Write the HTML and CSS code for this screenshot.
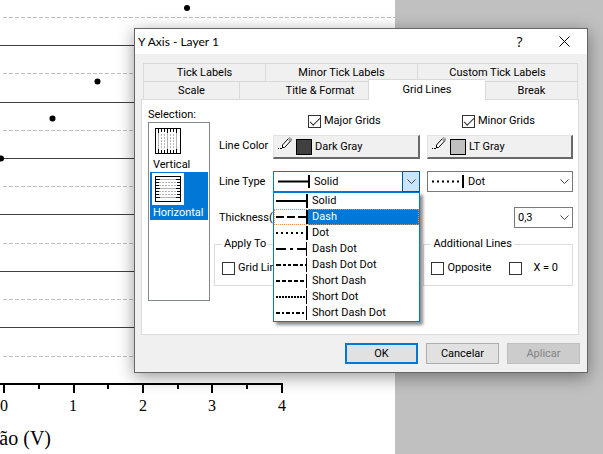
FILE: index.html
```html
<!DOCTYPE html>
<html lang="en">
<head>
<meta charset="utf-8">
<title>Y Axis - Layer 1</title>
<link rel="stylesheet" href="styles.css">
</head>
<body>
<svg class="defs" aria-hidden="true">
  <defs>
    <symbol id="pencil" viewBox="0 0 16 14">
      <path d="M5.500 10.500V7.500L11.500 1.500L14.500 2.500L8 10L5.500 10.500" stroke="none" fill="#fff"/>
      <path d="M11 3L13 1.500L14.500 2.500L12.500 4.500Z" fill="#a0a0a0"/>
      <path d="M5.500 11V8L11.500 1.500M5 10.500H7.500L14 3.500" stroke="#000" fill="none"/>
      <path d="M11.500 1.500L13 .5L14.500 2L14 3.500" stroke="#808080" fill="none"/>
      <path d="M1 11h1v1H1zM3 11h2v1H3z"/>
    </symbol>
    <symbol id="chevron" viewBox="0 0 9 6"><path d="M.5 .5l4 4 4-4" fill="none" stroke="#444"/></symbol>
  </defs>
</svg>

<svg class="chart" width="395" height="454" viewBox="0 0 395 454" role="img" aria-label="Graph">
  <g class="major"><path d="M0 45.500H395M0 102.500H395M0 158.500H395M0 214.500H395M0 271.500H395M0 327.500H395"/></g>
  <g class="minor"><path d="M3 17.500H395M3 73.500H395M3 130.500H395M3 186.500H395M3 243.500H395M3 299.500H395M3 356.500H395"/></g>
  <g class="axis"><path d="M0 384H283M4 384V393M74 384V393M143 384V393M212 384V393M282 384V393M39 384V389M108 384V389M178 384V389M247 384V389"/></g>
  <g class="points"><circle cx="187" cy="8" r="3"/><circle cx="97.500" cy="81.500" r="3"/><circle cx="52.500" cy="118.500" r="3"/><circle cx="1" cy="158.500" r="3"/></g>
  <g class="ticks"><text x="4" y="411">0</text><text x="73" y="411">1</text><text x="143" y="411">2</text><text x="212" y="411">3</text><text x="282" y="411">4</text></g>
  <text class="axis-title" x="51" y="445">ão (V)</text>
</svg>

<main class="dialog" role="dialog" aria-labelledby="title">
  <header class="titlebar">
    <h1 id="title">Y Axis - Layer 1</h1>
    <button class="caption" type="button">?</button>
    <button class="caption" type="button" aria-label="Close"><svg width="11" height="11" viewBox="0 0 11 11"><path d="M.5 .5l10 10M10.500 .5l-10 10" stroke="#000" fill="none"/></svg></button>
  </header>

  <nav class="tabs" role="tablist">
    <div class="tabrow back">
      <button type="button" role="tab">Tick Labels</button>
      <button type="button" role="tab">Minor Tick Labels</button>
      <button type="button" role="tab">Custom Tick Labels</button>
    </div>
    <div class="tabrow front">
      <button type="button" role="tab">Scale</button>
      <button type="button" role="tab" class="titletab">Title &amp; Format</button>
      <button type="button" role="tab" class="active" aria-selected="true">Grid Lines</button>
      <button type="button" role="tab">Break</button>
    </div>
  </nav>

  <section class="page" role="tabpanel">
    <div class="selection">
      <div class="caption-text">Selection:</div>
      <ul class="listbox" role="listbox" aria-label="Selection">
        <li role="option">
          <span class="thumb"><svg width="26" height="26" viewBox="0 0 26 26">
            <path d="M3.500 1v24M12.500 1v24M21.500 1v24" stroke="#b4b4b4"/>
            <path d="M6.500 6v15M9.500 6v15M15.500 6v15M18.500 6v15" stroke="#b4b4b4" stroke-dasharray="2 1"/>
            <path d="M3.500 1v4M6.500 1v3M9.500 1v3M12.500 1v4M15.500 1v3M18.500 1v3M21.500 1v4M3.500 25v-4M6.500 25v-3M9.500 25v-3M12.500 25v-4M15.500 25v-3M18.500 25v-3M21.500 25v-4" stroke="#000"/>
            <rect x=".5" y=".5" width="25" height="25" fill="none" stroke="#000"/>
          </svg></span>
          <span>Vertical</span>
        </li>
        <li role="option" class="selected" aria-selected="true">
          <span class="thumb"><svg width="26" height="26" viewBox="0 0 26 26">
            <path d="M1 3.500h24M1 12.500h24M1 21.500h24" stroke="#b4b4b4"/>
            <path d="M4 6.500h18M4 9.500h18M4 15.500h18M4 18.500h18" stroke="#b4b4b4" stroke-dasharray="2 1"/>
            <path d="M1 3.500h4M1 6.500h3M1 9.500h3M1 12.500h4M1 15.500h3M1 18.500h3M1 21.500h4M25 3.500h-4M25 6.500h-3M25 9.500h-3M25 12.500h-4M25 15.500h-3M25 18.500h-3M25 21.500h-4" stroke="#000"/>
            <rect x=".5" y=".5" width="25" height="25" fill="none" stroke="#000"/>
          </svg></span>
          <span>Horizontal</span>
        </li>
      </ul>
    </div>

    <form class="form">
      <div class="row checks">
        <span></span>
        <label class="check"><input type="checkbox" checked>Major Grids</label>
        <label class="check"><input type="checkbox" checked>Minor Grids</label>
      </div>
      <div class="row colors">
        <span class="name">Line Color</span>
        <button type="button" class="color"><svg width="16" height="14"><use href="#pencil"/></svg><i class="swatch dark"></i>Dark Gray</button>
        <button type="button" class="color"><svg width="16" height="14"><use href="#pencil"/></svg><i class="swatch light"></i>LT Gray</button>
      </div>
      <div class="row types">
        <label class="name" for="major-type">Line Type</label>
        <div class="combo open">
          <svg class="sample" width="32" height="13"><path d="M0 6.500H31" stroke-width="2"/><path d="M31 0V13" stroke-width="2"/></svg>
          <select id="major-type"><option>Solid</option></select>
          <span class="arrow"><svg width="9" height="6"><use href="#chevron"/></svg></span>
          <ul class="menu" role="listbox" aria-label="Line Type">
            <li><svg width="32" height="16"><path d="M0 8H30" stroke-width="2"/><path d="M31 1V15" stroke-width="2"/></svg><span>Solid</span></li>
            <li class="hot"><svg width="32" height="16"><path d="M0 8H30" stroke-width="2" stroke-dasharray="8 3"/><path d="M31 1V15" stroke-width="2"/></svg><span>Dash</span></li>
            <li><svg width="32" height="16"><path d="M0 8H30" stroke-width="2" stroke-dasharray="2 3"/><path d="M31 1V15" stroke-width="2"/></svg><span>Dot</span></li>
            <li><svg width="32" height="16"><path d="M0 8H30" stroke-width="2" stroke-dasharray="10 4 3 4"/><path d="M30.500 1V15"/></svg><span>Dash Dot</span></li>
            <li><svg width="32" height="16"><path d="M0 8H30" stroke-width="2" stroke-dasharray="5 2 3 2 3 2"/><path d="M30.500 1V15"/></svg><span>Dash Dot Dot</span></li>
            <li><svg width="32" height="16"><path d="M0 8H30" stroke-width="2" stroke-dasharray="4 2"/><path d="M30.500 1V15"/></svg><span>Short Dash</span></li>
            <li><svg width="32" height="16"><path d="M0 8H30" stroke-width="2" stroke-dasharray="2 1"/><path d="M30.500 1V15"/></svg><span>Short Dot</span></li>
            <li><svg width="32" height="16"><path d="M0 8H30" stroke-width="2" stroke-dasharray="4 2 2 2"/><path d="M30.500 1V15"/></svg><span>Short Dash Dot</span></li>
          </ul>
        </div>
        <div class="combo">
          <svg class="sample" width="32" height="13"><path d="M0 6.500H30" stroke-width="2" stroke-dasharray="2 3"/><path d="M31 0V13" stroke-width="2"/></svg>
          <select aria-label="Minor line type"><option>Dot</option></select>
          <span class="arrow"><svg width="9" height="6"><use href="#chevron"/></svg></span>
        </div>
      </div>
      <div class="row thickness">
        <label class="name" for="thick">Thickness(pts)</label>
        <span></span>
        <div class="combo small">
          <select id="thick"><option>0,3</option></select>
          <span class="arrow"><svg width="9" height="6"><use href="#chevron"/></svg></span>
        </div>
      </div>
      <div class="groups">
        <fieldset class="apply"><legend>Apply To</legend>
          <label class="check"><input type="checkbox">Grid Lines</label>
        </fieldset>
        <fieldset class="additional"><legend>Additional Lines</legend>
          <label class="check"><input type="checkbox">Opposite</label>
          <label class="check wide"><input type="checkbox">X = 0</label>
        </fieldset>
      </div>
    </form>
  </section>

  <footer class="actions">
    <button type="button" class="default">OK</button>
    <button type="button">Cancelar</button>
    <button type="button" disabled>Aplicar</button>
  </footer>
</main>
</body>
</html>
```
FILE: styles.css
```css
* { box-sizing: border-box; }

body {
  margin: 0;
  min-height: 100vh;
  overflow: hidden;
  background: #c0c0c0;
  color: #000;
  font: 11px/14px Roboto, "Liberation Sans", sans-serif;
}

button, select, input { font: inherit; color: inherit; }
button { padding: 0; border: 0; background: none; }
ul { list-style: none; margin: 0; padding: 0; }
svg { display: block; flex: none; }
.defs { position: absolute; width: 0; height: 0; }

.chart { background: #fff; }
.major { stroke: #404040; }
.minor { stroke: #c0c0c0; stroke-dasharray: 4 2; }
.axis { stroke: #000; stroke-width: 2; fill: none; }
.chart text { font-family: "Liberation Serif", serif; }
.ticks { font-size: 16px; text-anchor: middle; }
.chart .axis-title { font-size: 20px; text-anchor: end; }

.dialog {
  position: absolute;
  top: 28px;
  left: 134px;
  right: 15px;
  border: 1px solid #666;
  background: #f0f0f0;
  box-shadow: 0 4px 16px rgba(0, 0, 0, .4);
}

.titlebar { display: flex; align-items: center; height: 25px; padding: 0 0 0 3px; background: #fff; }
.titlebar h1 { flex: 1; margin: 0; font: 12px/16px Lato, sans-serif; }
.caption { display: flex; justify-content: center; align-items: center; width: 45px; height: 24px; font: 14px/16px "Open Sans", sans-serif; }

.tabs { padding: 9px 9px 0 8px; }
.tabrow { display: grid; height: 18px; }
.back { grid-template-columns: 122fr 152fr 161fr; }
.front { grid-template-columns: 96fr 129fr 117fr 93fr; }
.tabrow button { border: 1px solid #d9d9d9; border-width: 1px 0 0 1px; }
.tabrow button:last-child { border-right-width: 1px; }
.tabrow .titletab { padding-left: 32px; }
.tabrow .active { position: relative; height: 21px; margin: -2px 0 -1px; padding-bottom: 1px; background: #fff; }

.page {
  display: flex;
  gap: 4px;
  margin: 0 8px 0 6px;
  padding: 8px 5px 33px 6px;
  border: 1px solid #dcdcdc;
  background: #fff;
}

.selection { width: 62px; }
.listbox { height: 179px; margin-top: 0; padding: 1px; border: 1px solid #828790; }
.listbox li { height: 48px; padding: 1px 2px 0 3px; white-space: nowrap; }
.listbox .thumb { display: block; width: 32px; padding: 3px; margin: 0 0 1px -1px; background: #fff; }
.listbox .selected { background: #0078d7; color: #fff; }

.form { flex: 1; min-width: 0; }
.row { display: grid; grid-template-columns: 52px 147fr 146fr; column-gap: 7px; align-items: center; }
.name { padding-left: 5px; white-space: nowrap; }
.check { display: flex; align-items: center; gap: 3px; white-space: nowrap; }
.check.wide { gap: 11px; }
.checks { padding-top: 6px; }
.checks .check { padding-left: 35px; }

input[type="checkbox"] {
  appearance: none;
  flex: none;
  display: grid;
  place-items: center;
  width: 13px;
  height: 13px;
  margin: 0;
  border: 1px solid #333;
  background: #fff;
}
input:checked::after {
  content: "";
  width: 9px;
  height: 4px;
  border: solid #333;
  border-width: 0 0 1px 1px;
  transform: translateY(-1px) rotate(-45deg);
}

.colors { margin-top: 7px; }
.colors .name { padding-bottom: 3px; }
.color { display: flex; align-items: center; height: 24px; padding: 0 3px; border: 1px solid #e3e3e3; border-right: 2px solid #696969; border-bottom: 2px solid #696969; background: #f0f0f0; }
.color svg { margin-bottom: 6px; }
.swatch { width: 16px; height: 16px; margin: 0 3px; border: 1px solid #000; }
.dark { background: #404040; }
.light { background: #c0c0c0; }

.types { margin-top: 12px; }
.combo { position: relative; display: grid; grid-template-columns: 1fr 16px; height: 21px; border: 1px solid #7a7a7a; background: #fff; }
.combo > * { grid-row: 1; }
.combo select { grid-column: 1 / 3; appearance: none; width: 100%; padding: 0 3px; border: 0; outline: 0; background: none; }
.combo .sample { grid-column: 1; align-self: center; margin-left: 4px; }
.combo .sample ~ select { padding-left: 40px; }
.arrow { grid-column: 2; display: grid; place-items: center; pointer-events: none; }
.combo path { stroke: #000; }
.open { border-color: #0078d7; }
.open .arrow { margin: -1px; border: 1px solid #005499; background: #cce4f7; }

.menu { position: absolute; z-index: 2; top: calc(100% + 1px); left: -1px; right: -1px; border: 1px solid #0078d7; background: #fff; box-shadow: 3px 3px 3px rgba(0, 0, 0, .45); }
.menu li { position: relative; display: flex; height: 16px; padding-left: 2px; line-height: 16px; }
.menu span { flex: 1; padding-left: 4px; }
.menu .hot span { background: #0078d7; color: #fff; }
.menu .hot::after { content: ""; position: absolute; inset: 0; border: 1px dotted #ff8728; }

.thickness { margin-top: 15px; }
.small { width: 59px; justify-self: end; }

.groups { display: grid; grid-template-columns: 206fr 150fr; column-gap: 4px; margin-top: 9px; }
fieldset { display: flex; min-width: 0; height: 49px; margin: 0; padding: 0 7px; border: 1px solid #dcdcdc; align-items: center; }
legend { padding: 0 2px; }
.additional { gap: 18px; }

.actions { display: flex; justify-content: flex-end; gap: 8px; padding: 8px 7px; }
.actions button { width: 73px; height: 21px; border: 1px solid #adadad; background: #e1e1e1; }
.actions .default { border: 2px solid #0078d7; }
.actions button:disabled { border-color: #bfbfbf; background: #ccc; color: #838383; }
```
